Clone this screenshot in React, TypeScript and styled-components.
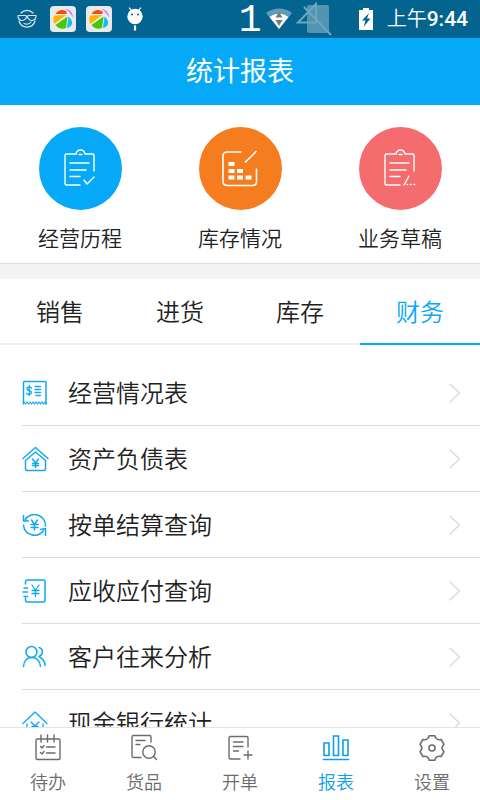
import React from "react";
import styled, { createGlobalStyle } from "styled-components";

const GlobalStyle = createGlobalStyle`
  * { box-sizing: border-box; }
  body {
    margin: 0;
    background: #fff;
    color: #222;
    font-family: "Noto Sans CJK SC", sans-serif;
    font-weight: 350;
  }
  button { font: inherit; color: inherit; background: none; border: 0; padding: 0; cursor: pointer; }
  a { color: inherit; text-decoration: none; }
  svg { display: block; flex: none; }
`;

const Screen = styled.div`
  display: flex;
  flex-direction: column;
  height: 100vh;
  overflow: hidden;
`;

const StatusBar = styled.div`
  flex: none;
  height: 38px;
  padding: 0 12px 0 16px;
  display: flex;
  align-items: center;
  justify-content: space-between;
  background: #03658f;
  color: #fff;
`;

const Notices = styled.div`
  display: flex;
  align-items: center;
  gap: 10px;
`;

const FaceSlot = styled.span`
  padding-right: 2px;
`;

const RobotSlot = styled.span`
  padding-left: 4px;
`;

const Signals = styled.div`
  display: flex;
  align-items: center;
  gap: 4px;
`;

const SlotNumber = styled.span`
  padding-top: 4px;
  font: 38px/38px "Liberation Mono", monospace;
`;

const Battery = styled.div`
  margin-left: 22px;
`;

const Clock = styled.time`
  margin-left: 10px;
  font: 500 21px/38px Roboto, "Noto Sans CJK SC", sans-serif;
`;

const ClockPeriod = styled.span`
  font-size: 20px;
  font-weight: 350;
`;

const TitleBar = styled.header`
  flex: none;
  height: 67px;
  padding-bottom: 3px;
  display: flex;
  align-items: center;
  justify-content: center;
  background: #05a9f7;
  color: #fff;
`;

const Title = styled.h1`
  margin: 0;
  font-size: 27px;
  line-height: 40px;
  font-weight: 400;
`;

const Shortcuts = styled.nav`
  flex: none;
  display: grid;
  grid-template-columns: repeat(3, 1fr);
  padding: 22px 0 10px;
  border-bottom: 1px solid #dcdcdc;
`;

const Shortcut = styled.a`
  display: flex;
  flex-direction: column;
  align-items: center;
  gap: 11px;
  font-size: 21px;
  line-height: 32px;
`;

const Disc = styled.span<{ $color: string }>`
  width: 83px;
  height: 83px;
  border-radius: 50%;
  display: flex;
  align-items: center;
  justify-content: center;
  background: ${(p) => p.$color};
`;

const Divider = styled.div`
  flex: none;
  height: 15px;
  background: #f3f3f3;
`;

const Tabs = styled.div`
  flex: none;
  display: grid;
  grid-template-columns: repeat(4, 1fr);
`;

const Tab = styled.button<{ $active?: boolean }>`
  && {
    height: 66px;
    font-size: 24px;
    line-height: 36px;
    color: ${(p) => (p.$active ? "#05a9f7" : "#222")};
    border-bottom: 2px solid ${(p) => (p.$active ? "#05a9f7" : "#efefef")};
  }
`;

const Reports = styled.ul`
  flex: 1;
  min-height: 0;
  margin: 0;
  padding: 15px 0 0 22px;
  list-style: none;
  overflow: hidden;
`;

const ReportItem = styled.li`
  border-bottom: 1px solid #dadada;
`;

const ReportLink = styled.a`
  height: 65px;
  padding-right: 19px;
  display: flex;
  align-items: center;
  gap: 19px;
  font-size: 24px;
  line-height: 36px;
`;

const ReportName = styled.span`
  flex: 1;
  padding-bottom: 2px;
`;

const BottomNav = styled.nav`
  flex: none;
  height: 73px;
  display: grid;
  grid-template-columns: repeat(5, 1fr);
  border-top: 1px solid #e4e4e4;
  background: #fff;
`;

const NavLink = styled.a<{ $active?: boolean }>`
  display: flex;
  flex-direction: column;
  align-items: center;
  padding-top: 5px;
  gap: 5px;
  font-size: 18px;
  line-height: 26px;
  color: ${(p) => (p.$active ? "#0f9ee8" : "#6c6c6c")};
`;

const line = { fill: "none", stroke: "currentColor", strokeLinecap: "round", strokeLinejoin: "round" } as const;

const FaceIcon = () => (
  <svg width="22" height="22" viewBox="0 0 22 22" {...line} stroke="#d5e5ec" strokeWidth="1.2">
    <path d="M5 5a8 8 0 0 1 12 0M3 13a8.300 8.300 0 0 0 16 0" />
    <path d="M2 7.500h7.500l1.500 1 1.500-1H20c0 3-1.500 5-4 5s-4-2-5-4c-1 2-2.500 4-5 4s-4-2-4-5Z" />
    <path d="M8 15.500c3 1.200 5.500.5 7-1.500" />
  </svg>
);

const BallIcon = () => (
  <svg width="26" height="26" viewBox="0 0 26 26">
    <rect width="26" height="26" rx="4" fill="#e9eaec" />
    <path d="M5.500 8C8 3.500 13 3 16.500 5.500V8Z" fill="#fb4a12" />
    <path d="M15.500 3c4.500.5 7.300 4 7.300 8.500-1.500-4-4-6.500-7.300-8.500Z" fill="#d74cf5" />
    <path d="M4 9.500 16 9 4.500 18C3 15 3 12 4 9.500Z" fill="#ffb400" />
    <path d="M17.500 10.500 16 22c-4 1.500-8 .5-10.500-3Z" fill="#45c80a" />
    <path d="M18.500 10.500c3 2.500 4.500 6 3 8.500-1 1.500-2.500 2.500-4.500 3Z" fill="#12bdf5" />
  </svg>
);

const RobotIcon = () => (
  <svg width="18" height="26" viewBox="0 0 18 26">
    <circle cx="9" cy="10.500" r="7.700" fill="#fff" />
    <path d="m3.500 2 2 3m9-3-2 3" stroke="#fff" strokeWidth="1.300" strokeLinecap="round" />
    <path d="M9 19.500v5" stroke="#fff" strokeWidth="2.200" />
    <circle cx="6" cy="8.500" r="1" fill="#03658f" />
    <circle cx="12" cy="8.500" r="1" fill="#03658f" />
  </svg>
);

const WifiIcon = () => (
  <svg width="26" height="22" viewBox="0 0 26 22">
    <path d="M0 5C7-1 19-1 26 5L13 21Z" fill="#5d9db9" />
    <path d="M3.500 9c6-4.500 13-4.500 19 0L13 21Z" fill="#fff" />
    <path d="m13 4 3.500 5.500h-7Zm0 14-3.500-6h7Z" fill="#77797a" />
  </svg>
);

const NoSignalIcon = () => (
  <svg width="37" height="34" viewBox="0 0 37 34">
    <rect x="11" y="3" width="22" height="28" rx="2" fill="#5295b3" />
    <path d="M2 20.500 20 2v18.500Z" fill="none" stroke="#6fa6be" strokeWidth="2" />
    <path d="m8 5 27 28" stroke="#6fa6be" strokeWidth="2" />
  </svg>
);

const BatteryIcon = () => (
  <svg width="14" height="22" viewBox="0 0 14 22">
    <path d="M4 0h6v2h4v20H0V2h4Z" fill="#fff" />
    <path d="M10 5 3 12.500h3.500L4.500 19l7-8.500H8Z" fill="#03658f" />
  </svg>
);

const Board = () => (
  <>
    <path d="M31 22V6.500q0-1.500-1.500-1.500H22c-1-5.300-8-5.300-9 0H3.500Q2 5 2 6.500v28Q2 36 3.500 36H17" />
    <path d="M16 5.500h3M7 14h19M7 21h16M7 27.500h10" />
  </>
);

const HistoryIcon = () => (
  <svg width="34" height="40" viewBox="0 0 34 40" {...line} stroke="#fff" strokeWidth="1.400">
    <Board />
    <path d="m21 31 3 4 7-7" />
  </svg>
);

const DraftIcon = () => (
  <svg width="34" height="40" viewBox="0 0 34 40" {...line} stroke="#fff" strokeWidth="1.400">
    <Board />
    <path d="m26 27-5 9" />
    <path d="M24 35.500h8" strokeWidth="1.600" strokeDasharray="0.500 3" />
  </svg>
);

const StockIcon = () => (
  <svg width="38" height="38" viewBox="0 0 38 38" {...line} stroke="#fff" strokeWidth="1.600">
    <path d="M20 2H6.500Q2 2 2 6v25.500Q2 35.500 6.500 35.500h25q4 0 4-4V19M35 1.500 24.500 12" />
    <path d="M7.500 12h6v4h-6zm0 7h6v4h-6zm0 6.500h6v4h-6zM16 19h6v4h-6zm0 6.500h6v4h-6zm8.500 0h6v4h-6z" fill="#fff" stroke="none" />
  </svg>
);

const rowIcon = { width: 27, height: 26, viewBox: "0 0 27 26", color: "#10a8f2", strokeWidth: 1.5, ...line };

const ReceiptIcon = () => (
  <svg {...rowIcon}>
    <path d="M1.500 24V2.500Q1.500 1.500 2.500 1.500h20.500q1 0 1 1V24" />
    <path d="m2 22 1.500 2L5 22l1.500 2L8 22l1.500 2 1.500-2 1.500 2 1.500-2 1.500 2 1.500-2 1.500 2 1.500-2 1.500 2 1.500-2 1 2" strokeWidth="1.200" />
    <path d="M9.500 8C8 6.500 4.500 7 5 9s4.500 1.500 4.500 3.500-3 2.500-5 1M7.300 5.500v10M13 6.500h5.500M13 9.500h5.500M13 12.500h5.500M14 15.500h4.500" strokeWidth="1.300" />
  </svg>
);

const HouseIcon = () => (
  <svg {...rowIcon}>
    <path d="M1 12.500 13.500 1.500 26 12.500" />
    <path d="M3.500 14.500V23q0 1.500 1.500 1.500h17q1.500 0 1.500-1.500v-8.500L13.500 6Z" />
    <path d="m10.500 13 3 4 3-4M13.500 17v4.500M10.500 17.500h6M10.500 19.500h6" />
  </svg>
);

const CycleIcon = () => (
  <svg {...rowIcon}>
    <path d="M3 8a11 11 0 0 1 20.500 6M1.500 13a11 11 0 0 0 20 5.500" />
    <path d="M1.500 3.500V9H6.500M18.500 17.500l5-1V23.500" />
    <path d="m9.500 8 3 4.500 3-4.500M12.500 12.500V18M9 12.500h7M9 15.500h7" />
  </svg>
);

const LedgerIcon = () => (
  <svg {...rowIcon}>
    <path d="M3.500 6V3.500Q3.500 2 5 2h16.500Q23 2 23 3.500v19q0 1.500-1.500 1.500H5q-1.500 0-1.500-1.500V20" />
    <path d="M2 10h3.500M1 14h4.500M2 18.500h3.500" />
    <path d="m10 7 3.500 5.500L17 7M13.500 12.500v6M10 12.500h7M10 15.500h7" strokeWidth="1.300" />
  </svg>
);

const PeopleIcon = () => (
  <svg {...rowIcon}>
    <circle cx="9.500" cy="8" r="5.500" />
    <path d="M1.500 22.500c0-12 16.500-12 17 0M17 3.500c4.500 1 4.500 7 0 9M17.500 13c4 2 5.500 4.500 5.500 8.500" />
  </svg>
);

const BankIcon = () => (
  <svg {...rowIcon}>
    <path d="M1 13.500 13 2l12 11.500M5 14v10h16V14" strokeWidth="1.300" />
    <path d="m9 12 4 4 4-4M13 16v6M10 16.500h6M10 19.500h6" strokeWidth="1.300" />
  </svg>
);

const Chevron = () => (
  <svg width="12" height="22" viewBox="0 0 12 22" {...line} stroke="#d9d9d9" strokeWidth="1.300">
    <path d="m1 2 9.500 9L1 20" />
  </svg>
);

const navIcon = { width: 30, height: 30, viewBox: "0 0 30 30", strokeWidth: 1.4, ...line };

const TodoIcon = () => (
  <svg {...navIcon}>
    <rect x="3" y="6" width="24" height="20.500" rx="1.500" />
    <path d="M8 2v7M14.500 2v7M21 2v7M13.500 14H22M13.500 20H22M7.500 13.500l1.500 1.500 2-2.500M7.500 19.500 9 21l2-2.500" />
  </svg>
);

const GoodsIcon = () => (
  <svg {...navIcon}>
    <path d="M12 24.500H4.500Q3 24.500 3 23V4q0-1.500 1.500-1.500h16Q22 2.500 22 4v5M7 7.500h9M7 11.500h4" />
    <circle cx="20" cy="19" r="6.200" />
    <path d="m24.500 23.500 3 3" />
  </svg>
);

const OrderIcon = () => (
  <svg {...navIcon}>
    <path d="M15 26H5.500Q4 26 4 24.500V5q0-1.500 1.500-1.500h16Q23 3.500 23 5v9M8.500 9H18M8.500 13.500H18M8.500 18h5M23 18v8M19 22h8" />
  </svg>
);

const ChartIcon = () => (
  <svg {...navIcon} strokeWidth={1.6} strokeLinejoin="miter">
    <path d="M3 10h5v12.500H3zM12.500 3h5v19.500h-5zM22 7h5v15.500h-5zM2.500 26.500h25" />
  </svg>
);

const GearIcon = () => (
  <svg {...navIcon} strokeWidth={1.6}>
    <path d="M12.200 2.800h5.600C19 6.500 20.500 7.200 24.100 6.500L27 11.300C24.300 14 24.300 16 27 18.700L24.100 23.500C20.500 22.800 19 23.500 17.800 27.200H12.200C11 23.500 9.500 22.800 5.900 23.500L3 18.700C5.700 16 5.700 14 3 11.300L5.900 6.500C9.500 7.200 11 6.500 12.200 2.800Z" />
    <circle cx="15" cy="15" r="3" />
  </svg>
);

const shortcuts = [
  { name: "经营历程", color: "#05a9f7", Icon: HistoryIcon },
  { name: "库存情况", color: "#f57c1f", Icon: StockIcon },
  { name: "业务草稿", color: "#f56c6e", Icon: DraftIcon },
];

const tabs = ["销售", "进货", "库存", "财务"];

const reports = [
  { name: "经营情况表", Icon: ReceiptIcon },
  { name: "资产负债表", Icon: HouseIcon },
  { name: "按单结算查询", Icon: CycleIcon },
  { name: "应收应付查询", Icon: LedgerIcon },
  { name: "客户往来分析", Icon: PeopleIcon },
  { name: "现金银行统计", Icon: BankIcon },
];

const sections = [
  { name: "待办", Icon: TodoIcon },
  { name: "货品", Icon: GoodsIcon },
  { name: "开单", Icon: OrderIcon },
  { name: "报表", Icon: ChartIcon },
  { name: "设置", Icon: GearIcon },
];

export default function App() {
  const [tab, setTab] = React.useState("财务");
  return (
    <Screen>
      <GlobalStyle />
      <StatusBar>
        <Notices>
          <FaceSlot>
            <FaceIcon />
          </FaceSlot>
          <BallIcon />
          <BallIcon />
          <RobotSlot>
            <RobotIcon />
          </RobotSlot>
        </Notices>
        <Signals>
          <SlotNumber>1</SlotNumber>
          <WifiIcon />
          <NoSignalIcon />
          <Battery>
            <BatteryIcon />
          </Battery>
          <Clock>
            <ClockPeriod>上午</ClockPeriod>9:44
          </Clock>
        </Signals>
      </StatusBar>
      <TitleBar>
        <Title>统计报表</Title>
      </TitleBar>
      <Shortcuts>
        {shortcuts.map(({ name, color, Icon }) => (
          <Shortcut key={name} href="#">
            <Disc $color={color}>
              <Icon />
            </Disc>
            {name}
          </Shortcut>
        ))}
      </Shortcuts>
      <Divider />
      <Tabs role="tablist">
        {tabs.map((name) => (
          <Tab key={name} role="tab" aria-selected={tab === name} $active={tab === name} onClick={() => setTab(name)}>
            {name}
          </Tab>
        ))}
      </Tabs>
      <Reports>
        {reports.map(({ name, Icon }) => (
          <ReportItem key={name}>
            <ReportLink href="#">
              <Icon />
              <ReportName>{name}</ReportName>
              <Chevron />
            </ReportLink>
          </ReportItem>
        ))}
      </Reports>
      <BottomNav>
        {sections.map(({ name, Icon }) => (
          <NavLink key={name} href="#" $active={name === "报表"}>
            <Icon />
            {name}
          </NavLink>
        ))}
      </BottomNav>
    </Screen>
  );
}
